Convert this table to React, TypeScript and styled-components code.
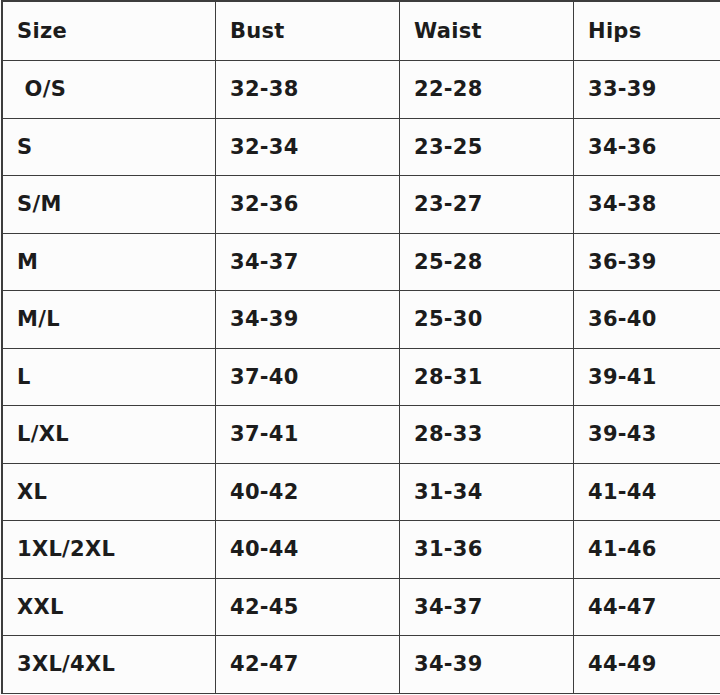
import React from "react";
import styled, { createGlobalStyle } from "styled-components";

const GlobalStyle = createGlobalStyle`
  html, body {
    margin: 0;
    padding: 0;
    background: #fcfcfc;
    overflow: hidden;
  }
`;

const Page = styled.div`
  width: 720px;
  height: 695px;
  padding: 0 0 0 1px;
  box-sizing: border-box;
  background: #fcfcfc;
`;

const Grid = styled.div`
  display: grid;
  grid-template-columns: 213px 184px 174px 1fr;
  grid-template-rows: 59px repeat(11, 57.5px);
  border-top: 2px solid #3d3d3d;
  border-left: 2px solid #3d3d3d;
  font-family: "DejaVu Sans", "Liberation Sans", sans-serif;
  font-weight: bold;
  font-size: 21px;
  color: #1c1c1c;
`;

const Cell = styled.div<{ $last?: boolean }>`
  display: flex;
  align-items: center;
  padding-left: 14px;
  border-bottom: 1.5px solid #3d3d3d;
  border-right: ${({ $last }) => ($last ? "none" : "1.5px solid #3d3d3d")};
  white-space: pre;
  letter-spacing: 0.3px;
  box-sizing: border-box;
`;

const headers = ["Size", "Bust", "Waist", "Hips"];

const rows: string[][] = [
  [" O/S", "32-38", "22-28", "33-39"],
  ["S", "32-34", "23-25", "34-36"],
  ["S/M", "32-36", "23-27", "34-38"],
  ["M", "34-37", "25-28", "36-39"],
  ["M/L", "34-39", "25-30", "36-40"],
  ["L", "37-40", "28-31", "39-41"],
  ["L/XL", "37-41", "28-33", "39-43"],
  ["XL", "40-42", "31-34", "41-44"],
  ["1XL/2XL", "40-44", "31-36", "41-46"],
  ["XXL", "42-45", "34-37", "44-47"],
  ["3XL/4XL", "42-47", "34-39", "44-49"],
];

export default function App() {
  return (
    <>
      <GlobalStyle />
      <Page>
        <Grid role="table">
          {[headers, ...rows].map((r, ri) =>
            r.map((c, i) => (
              <Cell key={`${ri}-${i}`} $last={i === 3} role={ri === 0 ? "columnheader" : "cell"}>
                {c}
              </Cell>
            ))
          )}
        </Grid>
      </Page>
    </>
  );
}
